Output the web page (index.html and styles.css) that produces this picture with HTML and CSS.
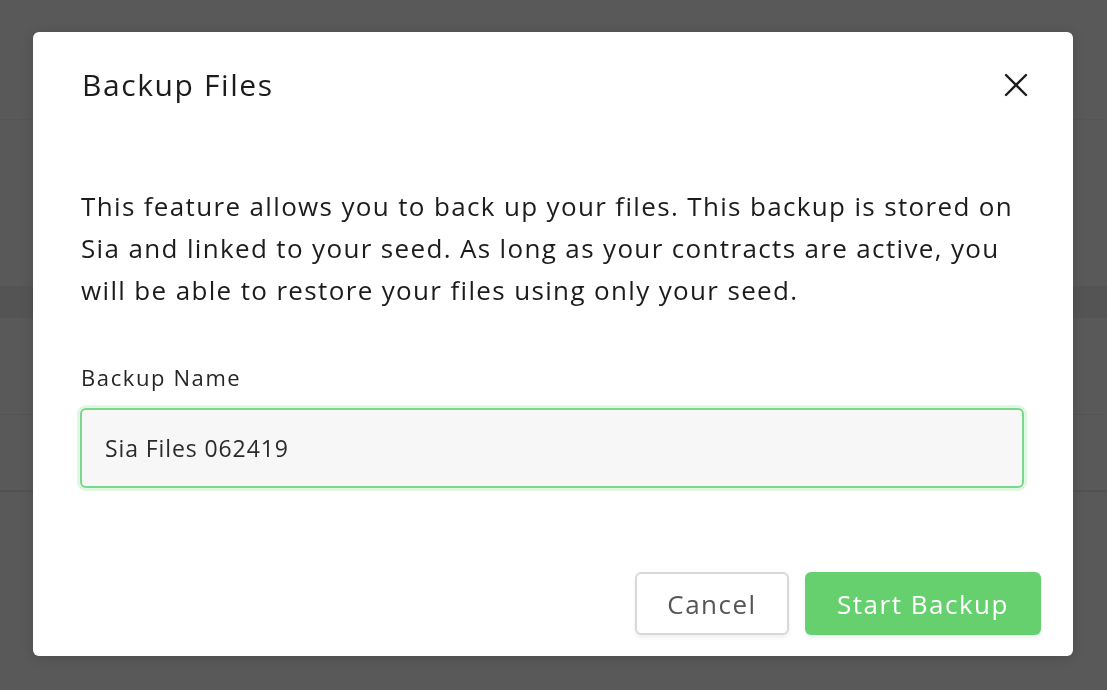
FILE: index.html
```html
<!DOCTYPE html>
<html lang="en">

<head>
  <meta charset="UTF-8">
  <meta name="viewport" content="width=device-width, initial-scale=1.0">
  <title>Backup Files</title>
  <link rel="stylesheet" href="styles.css">
</head>

<body>
  <div class="app">
    <div class="app-header"></div>
    <div class="app-toolbar"></div>
    <div class="app-thead"></div>
    <div class="app-row app-row-tall"></div>
    <div class="app-row"></div>
    <div class="app-rest"></div>
  </div>

  <div class="overlay">
    <div class="modal">
      <div class="modal-head">
        <h1 class="modal-title">Backup Files</h1>
        <button class="modal-close" aria-label="Close">
          <svg width="24" height="24" viewBox="0 0 24 24">
            <path d="M2 2 L22 22 M22 2 L2 22" stroke="#1c1c1c" stroke-width="2.4" stroke-linecap="round" fill="none"/>
          </svg>
        </button>
      </div>
      <div class="modal-body">
        <p class="modal-text">This feature allows you to back up your files. This backup is stored on Sia and linked to your seed. As long as your contracts are active, you will be able to restore your files using only your seed.</p>
        <label class="field-label" for="backup-name">Backup Name</label>
        <input class="field-input" id="backup-name" type="text" value="Sia Files 062419">
      </div>
      <div class="modal-foot">
        <button class="btn btn-cancel">Cancel</button>
        <button class="btn btn-primary">Start Backup</button>
      </div>
    </div>
  </div>
</body>

</html>
```

FILE: styles.css
```css
* {
  margin: 0;
  padding: 0;
  box-sizing: border-box;
}

body {
  width: 1107px;
  height: 690px;
  overflow: hidden;
  background-color: #595959;
  font-family: "Open Sans", "Noto Sans", sans-serif;
  color: #1c1c1c;
}

/* dimmed app behind the dialog */
.app {
  display: flex;
  flex-direction: column;
  height: 690px;
}

.app-header {
  height: 120px;
  border-bottom: 1px solid #555555;
}

.app-toolbar {
  height: 166px;
}

.app-thead {
  height: 32px;
  background-color: #545454;
}

.app-row {
  height: 76px;
  border-bottom: 1px solid #535353;
}

.app-row-tall {
  height: 97px;
}

.app-rest {
  flex: 1;
  border-top: 1px solid #505050;
}

.overlay {
  position: fixed;
  top: 0;
  left: 0;
  right: 0;
  bottom: 0;
  padding: 32px 34px 34px 33px;
}

.modal {
  width: 1040px;
  height: 624px;
  background: #ffffff;
  border-radius: 6px;
  box-shadow: 0 2px 12px rgba(0, 0, 0, 0.15);
  display: flex;
  flex-direction: column;
}

.modal-head {
  display: flex;
  align-items: center;
  justify-content: space-between;
  padding: 0 45px 0 49px;
  height: 106px;
}

.modal-title {
  font-size: 30px;
  line-height: 40px;
  font-weight: 400;
  letter-spacing: 1.6px;
  color: #1c1c1c;
}

.modal-close {
  border: none;
  background: none;
  width: 24px;
  height: 24px;
  display: flex;
}

.modal-body {
  padding: 47px 48px 0 48px;
  flex: 1;
}

.modal-text {
  font-size: 26px;
  line-height: 42px;
  letter-spacing: 1.35px;
  color: #1c1c1c;
}

.field-label {
  display: block;
  margin-top: 52px;
  font-size: 22px;
  line-height: 28px;
  font-weight: 500;
  letter-spacing: 1.6px;
  color: #262626;
}

.field-input {
  display: block;
  width: 944px;
  height: 80px;
  margin-top: 17px;
  margin-left: -1px;
  padding: 0 23px;
  border: 2px solid #7ad88a;
  border-radius: 6px;
  background: #f7f7f7;
  box-shadow: 0 0 0 3px #e1f6e3;
  font-family: "Open Sans", "Noto Sans", sans-serif;
  font-size: 23px;
  letter-spacing: 0.9px;
  color: #2a2a2a;
  outline: none;
}

.modal-foot {
  display: flex;
  justify-content: flex-end;
  gap: 16px;
  padding: 0 32px 21px 0;
}

.btn {
  height: 63px;
  border-radius: 6px;
  font-family: "Open Sans", "Noto Sans", sans-serif;
  font-size: 26px;
  letter-spacing: 1.5px;
  box-shadow: 0 3px 4px rgba(0, 0, 0, 0.06);
}

.btn-cancel {
  width: 154px;
  background: #ffffff;
  border: 2px solid #d8d8d8;
  color: #555555;
}

.btn-primary {
  width: 236px;
  background: #66d06f;
  border: none;
  color: #ffffff;
}
```
